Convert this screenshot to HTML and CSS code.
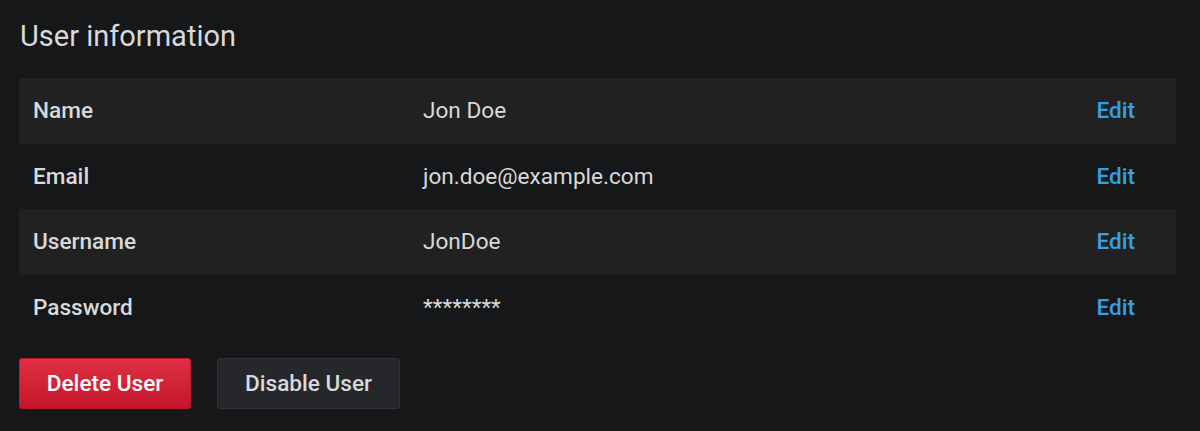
FILE: index.html
```html
<!DOCTYPE html>
<html>
<head>
<meta charset="utf-8">
<link rel="stylesheet" href="styles.css">
</head>
<body>
<div class="page">
  <h3 class="title">User information</h3>
  <div class="table">
    <div class="row stripe">
      <div class="label">Name</div>
      <div class="value">Jon Doe</div>
      <a class="edit">Edit</a>
    </div>
    <div class="row">
      <div class="label">Email</div>
      <div class="value">jon.doe@example.com</div>
      <a class="edit">Edit</a>
    </div>
    <div class="row stripe">
      <div class="label">Username</div>
      <div class="value">JonDoe</div>
      <a class="edit">Edit</a>
    </div>
    <div class="row">
      <div class="label">Password</div>
      <div class="value">********</div>
      <a class="edit">Edit</a>
    </div>
  </div>
  <div class="actions">
    <button class="btn btn-danger">Delete User</button>
    <button class="btn btn-secondary">Disable User</button>
  </div>
</div>
</body>
</html>
```
FILE: styles.css
```css
html, body {
  margin: 0;
  padding: 0;
  background: #161719;
}
body {
  font-family: Roboto, "Liberation Sans", sans-serif;
  color: #d8d9da;
}
.page {
  padding: 16px 24px 0 19px;
}
.title {
  margin: 0 0 0 1px;
  font-size: 29px;
  font-weight: 400;
  line-height: 40px;
  color: #d8d9da;
}
.table {
  margin-top: 22px;
  width: 1157px;
}
.row {
  display: grid;
  grid-template-columns: 390px 1fr auto;
  align-items: center;
  height: 65.5px;
  padding: 0 41px 0 14px;
  font-size: 22.6px;
}
.row.stripe {
  background: #212121;
}
.label {
  font-weight: 500;
  color: #d8d9da;
}
.value {
  color: #d8d9da;
}
.edit {
  color: #33a2e5;
  font-weight: 500;
  cursor: pointer;
}
.actions {
  display: flex;
  gap: 26px;
  margin-top: 18px;
}
.btn {
  font-family: Roboto, "Liberation Sans", sans-serif;
  font-size: 22.6px;
  font-weight: 500;
  height: 51px;
  padding: 0;
  border-radius: 3px;
  cursor: pointer;
}
.btn-danger {
  background: linear-gradient(to bottom, #e02f44, #c4162a);
  border: 1px solid #c4162a;
  color: #ffffff;
  width: 172px;
}
.btn-secondary {
  background: #25272b;
  border: 1px solid #303236;
  color: #d8d9da;
  width: 183px;
}
```
